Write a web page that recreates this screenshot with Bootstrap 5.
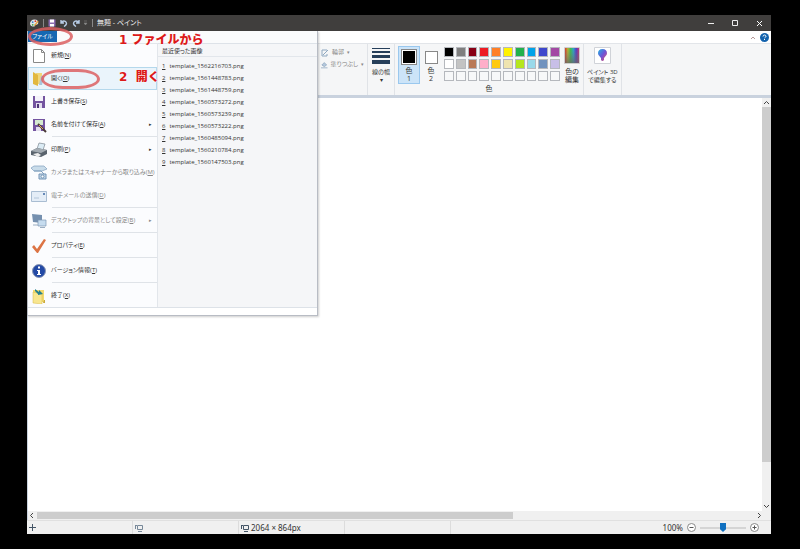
<!DOCTYPE html>
<html>
<head>
<meta charset="utf-8">
<meta name="viewport" content="width=device-width, initial-scale=1">
<title>無題 - ペイント</title>
<link href="https://cdn.jsdelivr.net/npm/bootstrap@5.3.0/dist/css/bootstrap.min.css" rel="stylesheet">
<style>
body{background:#000;font-family:"Open Sans","Noto Sans CJK JP",sans-serif;font-size:6px;line-height:9px;color:#333;font-feature-settings:"palt"}
.frame{min-height:100vh;padding:15px 29px 15px 27px}
.titlebar{height:16px;background:#403e3d;color:#eee;padding:0 3px;gap:4px}
.titlebar h1{font-size:7px;line-height:16px;font-weight:400;margin:0}
button{border:0;background:none;padding:0;color:inherit;font:inherit;line-height:inherit}
.vbar{width:1px;height:8px;background:#888}
.wincontrols{gap:14px}
.tabrow{height:12px;padding:0 2px}
.ribbon{height:55px;background:#f5f6f7;border-top:1px solid #e2e5e9;border-bottom:3px solid #c9d2de;padding-left:291px}
.group{border-right:1px solid #e0e3e7;padding:2px 3px 0}
.shapes{width:50px;color:#888;gap:3px;padding-top:4px}
.shapes button{white-space:nowrap;gap:3px}
.linesize{width:27px}
.colorgroup{width:189px;font-size:7px}
.toolbtn{height:38px;text-align:center;line-height:8px}
.slot{width:22px;border:1px solid transparent;padding-top:2px}
.slot.chosen{background:#cce4f8;border-color:#9ac8ee}
.swatch{display:block;margin:0 auto 2px;border:1px solid #888;outline:1px solid #fff;outline-offset:-2px;width:16px;height:16px}
.swatch.front{background:#000}
.swatch.back{background:#fff;width:13px;height:13px;margin-top:2px;margin-bottom:3px}
.palette{display:grid;grid-template-columns:repeat(10,1fr);align-content:start;gap:2px;width:116px;margin-left:2px;padding-top:1px}
.palette button{height:10px;border:1px solid #b5b8bd}
.workspace{background:#fff;border-left:1px solid #c9d2de}
.scroll{background:#f0f0f0}
.scroll-v{width:9px}
.scroll-h{height:9px}
.thumb-v{background:#cdcdcd;height:86%;width:9px}
.thumb-h{background:#cdcdcd;height:7px;width:64%}
.status{height:14px;background:#f0f0f0;border-top:1px solid #e0e0e0;font-size:8px;line-height:12px;font-family:"Noto Sans","Open Sans",sans-serif}
.cell{width:106px;padding-left:2px;border-right:1px solid #dcdcdc;gap:2px}
.zoomrange{appearance:none;width:46px;height:9px;background:linear-gradient(#d5d5d5,#d5d5d5) center/100% 2px no-repeat;margin:0}
.zoomrange::-webkit-slider-thumb{appearance:none;width:6px;height:9px;background:#1070c0;clip-path:polygon(0 0,100% 0,100% 70%,50% 100%,0 70%)}
.filemenu{top:16px;left:0;width:291px;background:#f5f6f8;border:1px solid #b8bcc4;border-width:0 1px 1px;box-shadow:1px 1px 2px #0003}
.menutop{height:12px;background:#fafbfc}
.filetab{width:29px;height:11px;background:#1668b2;color:#fff;text-align:center}
.menuleft{width:130px;background:#fbfcfe;border-right:1px solid #e2e6eb;border-top:1px solid #e2e6eb}
.menuleft button{height:23px;width:100%;padding:0 4px 0 2px;text-align:left;gap:4px;border:1px solid transparent;white-space:nowrap}
.menuleft button.hot{background:#eaf4fb;border-color:#b4d8ec}
.menuleft button:disabled{color:#888}
.menuleft svg.ico{width:16px;height:16px;flex:none}
.rule{height:1px;background:#dfe3e8;margin:0 0 1px 24px}
.recent{border-top:1px solid #dde2e8;padding-top:2px}
.recent h2{font-size:6px;line-height:10px;font-weight:400;margin:0 0 3px;padding-left:4px;border-bottom:1px solid #e2e6eb}
.recent a{display:flex;gap:4px;line-height:12px;color:#333;text-decoration:none;padding-left:4px}
.menufoot{height:8px;background:#fff;border-top:1px solid #dde2e8}
.note{color:#dc1a1a;font-weight:900;font-size:12px;line-height:14px;font-family:"DejaVu Sans","Noto Sans CJK JP",sans-serif;font-feature-settings:normal;text-shadow:0 0 1px #fff,0 0 2px #fff;white-space:pre}
.note1{left:92px;top:18px}
.note2{left:92px;top:55px}
.ring{border:3px solid #dc5f61d9}
.ring1{left:1px;top:12px;width:45px;height:19px;border-radius:50%}
.ring2{left:14px;top:54px;width:59px;height:20px;border-radius:22px/10px}
</style>
<script src="https://cdn.jsdelivr.net/npm/bootstrap@5.3.0/dist/js/bootstrap.bundle.min.js"></script>
</head>
<body>
<div class="frame d-flex flex-column">
<main class="position-relative flex-grow-1 d-flex flex-column">
<header class="titlebar d-flex align-items-center">
<svg width="9" height="10" viewBox="0 0 10 10"><path d="M5 1C2 1 0 3 0 5.500S2 9 5 9q1-1 0-2 2 0 4-1Q10 1 5 1Z" fill="#dfe5e8"/><circle cx="3" cy="4" r="1" fill="#2f7dd0"/><circle cx="6" cy="3" r="1" fill="#d63b30"/><circle cx="3" cy="7" r="1" fill="#40a347"/><path d="m5 8 4-5" stroke="#e9a33c" stroke-width="1.500"/></svg>
<span class="vbar"></span>
<button aria-label="Save"><svg class="d-block" width="8" height="8" viewBox="0 0 16 16"><path d="M1 1h14v14H1z" fill="#8a6bb0"/><path d="M4 1h8v6H4zM4 10h8v5H4z" fill="#fff"/></svg></button>
<button aria-label="Undo"><svg class="d-block" width="8" height="8" viewBox="0 0 8 8" fill="none" stroke="#b7cbe5" stroke-width="1.400"><path d="M1 1v3h3M1 4q2-3 4.500-1.500Q8 5 4 7.500"/></svg></button>
<button aria-label="Redo"><svg class="d-block" width="8" height="8" viewBox="0 0 8 8" fill="none" stroke="#b7cbe5" stroke-width="1.400"><path d="M7 1v3H4M7 4Q5 1 2.500 2.500 0 5 4 7.500"/></svg></button>
<button aria-label="Customize"><svg class="d-block" width="4" height="6"><path d="M0 1h3M0 3h3l-1.500 2z" fill="#888" stroke="#888" stroke-width=".5"/></svg></button>
<span class="vbar"></span>
<h1>無題 - ペイント</h1>
<div class="wincontrols ms-auto d-flex">
<button aria-label="Minimize"><svg class="d-block" width="10" height="10"><path d="M2 5.500h6" stroke="#eee"/></svg></button>
<button aria-label="Maximize"><svg class="d-block" width="10" height="10"><path d="M2.500 2.500h5v5h-5z" fill="none" stroke="#eee"/></svg></button>
<button aria-label="Close"><svg class="d-block me-1" width="10" height="10"><path d="m3 3 5 5m0-5L3 8" stroke="#fff"/></svg></button>
</div>
</header>
<div class="tabrow bg-white d-flex align-items-center justify-content-end gap-1">
<button aria-label="Collapse ribbon"><svg class="d-block" width="6" height="5"><path d="m1 4 2-2 2 2" fill="none" stroke="#b79a9a"/></svg></button>
<button aria-label="Help"><svg class="d-block" width="9" height="9" viewBox="0 0 9 9"><circle cx="4.500" cy="4.500" r="4.500" fill="#1262ad"/><path d="M3 3.500q.2-1.500 1.500-1.500T6 3.300Q6 4 4.500 5M4.500 6v1" fill="none" stroke="#fff"/></svg></button>
</div>
<section class="ribbon d-flex">
<div class="group shapes d-flex flex-column">
<button class="d-flex align-items-center" disabled><svg width="8" height="8" viewBox="0 0 8 8"><path d="M1 1h5M1 1v6h5V5M2 6l5-5" fill="none" stroke="#8fa8c0"/></svg>輪郭<small>▾</small></button>
<button class="d-flex align-items-center" disabled><svg width="8" height="8" viewBox="0 0 8 8"><path d="m1 4 3-3 3 3-3 2z" fill="#b4c8dc" stroke="#7f9ab5" stroke-width=".7"/><path d="M0 7.500h8" stroke="#8fa8c0"/></svg>塗りつぶし<small>▾</small></button>
</div>
<div class="group linesize px-0"><button class="toolbtn w-100"><svg class="d-block mx-auto mb-1" width="18" height="17"><path d="M0 1.500h18" stroke="#263f5a"/><path d="M0 5h18" stroke="#263f5a" stroke-width="2"/><path d="M0 9.500h18" stroke="#263f5a" stroke-width="3"/><path d="M0 15h18" stroke="#263f5a" stroke-width="4"/></svg>線の幅<br>▾</button></div>
<div class="group colorgroup">
<div class="d-flex">
<button class="toolbtn slot chosen"><span class="swatch front"></span>色<br>1</button>
<button class="toolbtn slot"><span class="swatch back"></span>色<br>2</button>
<div class="palette" id="palette"></div>
<button class="toolbtn ms-1"><svg class="d-block mx-auto mb-1" width="16" height="17"><defs><linearGradient id="hue"><stop stop-color="#e03028"/><stop offset=".2" stop-color="#b8b830"/><stop offset=".4" stop-color="#38c050"/><stop offset=".6" stop-color="#28a8c8"/><stop offset=".8" stop-color="#5038d0"/><stop offset="1" stop-color="#c83070"/></linearGradient><linearGradient id="dim" x2="0" y2="1"><stop stop-color="#777" stop-opacity="0"/><stop offset="1" stop-color="#666" stop-opacity=".8"/></linearGradient></defs><path d="M1 1h14v15H1z" fill="url(#hue)"/><path d="M.5.5h15v16H.5z" fill="url(#dim)" stroke="#ccc"/></svg>色の<br>編集</button>
</div>
<div class="text-center">色</div>
</div>
<div class="group"><button class="toolbtn"><svg class="d-block mx-auto mb-1" width="17" height="17"><defs><linearGradient id="pin" x2="1" y2="1"><stop stop-color="#20b5e0"/><stop offset=".5" stop-color="#6b55d8"/><stop offset="1" stop-color="#f0506a"/></linearGradient></defs><path d="M.5.5h16v16H.5z" fill="#fff" stroke="#d0d3d8"/><path d="M8.500 2C5.500 2 4 4 4 6.200c0 2 2 3.300 3 4.800v2q1.500 2 3 0v-2c1-1.500 3-2.800 3-4.800C13 4 11.500 2 8.500 2Z" fill="url(#pin)"/></svg>ペイント 3D<br>で編集する</button></div>
</section>
<section class="workspace flex-grow-1 d-flex flex-column" aria-label="Canvas">
<div class="d-flex flex-grow-1"><div class="flex-grow-1"></div>
<div class="scroll scroll-v d-flex flex-column"><svg width="9" height="9"><path d="m2 6 2.500-2.500L7 6" fill="none" stroke="#444"/></svg><div class="thumb-v"></div><svg class="mt-auto" width="9" height="9"><path d="m2 3 2.500 2.500L7 3" fill="none" stroke="#444"/></svg></div></div>
<div class="scroll scroll-h d-flex align-items-center"><svg width="9" height="9"><path d="M5 2 2.500 4.500 5 7" fill="none" stroke="#444"/></svg><div class="thumb-h"></div><svg class="ms-auto me-2" width="9" height="9"><path d="m4 2 2.500 2.500L4 7" fill="none" stroke="#444"/></svg></div>
</section>
<footer class="status d-flex">
<div class="cell d-flex align-items-center"><svg width="7" height="7"><path d="M3.500 0v7M0 3.500h7" stroke="#456"/></svg></div>
<div class="cell d-flex align-items-center"><svg width="8" height="8"><path d="M2.500 1.500h5v4h-5zM0 1.500h2M.5 1v4M3 7.500h4" fill="none" stroke="#789"/></svg></div>
<div class="cell d-flex align-items-center"><svg width="8" height="8"><path d="M2.500 1.500h5v4h-5zM0 1.500h2M.5 1v4M3 7.500h4" fill="none" stroke="#456"/></svg>2064 × 864px</div>
<div class="cell"></div>
<div class="ms-auto d-flex align-items-center gap-1 pe-2"><label for="zoom">100%</label>
<button aria-label="Zoom out"><svg class="d-block" width="9" height="9"><circle cx="4.500" cy="4.500" r="4" fill="#fff" stroke="#888"/><path d="M2.500 4.500h4" stroke="#555"/></svg></button>
<input class="zoomrange" id="zoom" type="range" value="50">
<button class="me-1" aria-label="Zoom in"><svg class="d-block" width="9" height="9"><circle cx="4.500" cy="4.500" r="4" fill="#fff" stroke="#888"/><path d="M2.500 4.500h4m-2-2v4" stroke="#555"/></svg></button></div>
</footer>
<nav class="filemenu position-absolute" aria-label="ファイル">
<div class="menutop"><button class="filetab d-block">ファイル</button></div>
<div class="d-flex">
<div class="menuleft flex-shrink-0">
<button class="d-flex align-items-center"><svg class="ico" viewBox="0 0 16 16"><path d="M2.500 1.500h8l3 3v10h-11zM10.500 1.500v3h3" fill="#fff" stroke="#888"/></svg><span>新規(<u>N</u>)</span></button>
<button class="hot d-flex align-items-center"><svg class="ico" viewBox="0 0 16 16"><path d="M5 2h6v11H5z" fill="#f0d67a"/><path d="m2 1 5 3v11l-5-2z" fill="#e2b83f"/><path d="m8 14 2-9h3l-2 9z" fill="#a9c4dc"/></svg><span>開く(<u>O</u>)</span></button>
<button class="d-flex align-items-center"><svg class="ico" viewBox="0 0 16 16"><path d="M2 2h12v12H2z" fill="#7454a0"/><path d="M4 2h8v5H4z" fill="#f4f2fa"/><path d="M5 9h6v5H5z" fill="#e3deee"/><path d="M6 10h2v4H6z" fill="#503678"/></svg><span>上書き保存(<u>S</u>)</span></button>
<button class="d-flex align-items-center"><svg class="ico" viewBox="0 0 16 16"><path d="M2 2h12v12H2z" fill="#7454a0"/><path d="M4 3h8v5H4z" fill="#d5ead0"/><path d="M5 10h5v4H5z" fill="#e3deee"/><path d="m7 7 8 8" stroke="#4a3a38" stroke-width="2"/><path d="m8 8 4 4" stroke="#dfa85f"/></svg><span>名前を付けて保存(<u>A</u>)</span><small class="ms-auto">▸</small></button>
<div class="rule"></div>
<button class="d-flex align-items-center"><svg class="ico" viewBox="0 0 16 16"><path d="m6 7 2-6 6 1-2 6z" fill="#dcecf5" stroke="#7c8790" stroke-width=".7"/><path d="m0 9 6-3 10 2v4l-6 3-10-2z" fill="#59636d"/><path d="m0 9 6-3 10 2-6 3z" fill="#a3abb2"/><path d="m2 12 5-1 3 2-3 2z" fill="#eee"/></svg><span>印刷(<u>P</u>)</span><small class="ms-auto">▸</small></button>
<button class="d-flex align-items-center" disabled><svg class="ico" viewBox="0 0 16 16"><path d="m0 3 3-2h10l3 3-5 2H3z" fill="#c9dcea" stroke="#7f9fbd" stroke-width=".7"/><path d="M3 6h7l3 3" fill="none" stroke="#7f9fbd"/><path d="M8 9h7v5H8z" fill="#c4d7e8" stroke="#7294b6"/><circle cx="11.500" cy="11.500" r="1.500" fill="#fff" stroke="#7294b6"/></svg><span>カメラまたはスキャナーから取り込み(<u>M</u>)</span></button>
<button class="d-flex align-items-center" disabled><svg class="ico" viewBox="0 0 16 16"><path d="M.5 3.500h15v10H.5z" fill="#e4edf7" stroke="#a9bdd2"/><path d="M12 5h2v2h-2z" fill="#6689b8"/><path d="M3 10h5" stroke="#b3c6da"/></svg><span>電子メールの送信(<u>D</u>)</span></button>
<div class="rule"></div>
<button class="d-flex align-items-center" disabled><svg class="ico" viewBox="0 0 16 16"><path d="m1 1 10 1v8L2 9z" fill="#7590af"/><path d="M7 7h8v6H7z" fill="#c6dcef" stroke="#8099b5" stroke-width=".7"/><path d="M2 12h5m2 2.500h5" stroke="#9baec2"/></svg><span>デスクトップの背景として設定(<u>B</u>)</span><small class="ms-auto">▸</small></button>
<div class="rule"></div>
<button class="d-flex align-items-center"><svg class="ico" viewBox="0 0 16 16"><path d="m1 9 2-2 3 4 7-10 2 1-8 13H6z" fill="#dc7444"/></svg><span>プロパティ(<u>E</u>)</span></button>
<div class="rule"></div>
<button class="d-flex align-items-center"><svg class="ico" viewBox="0 0 16 16"><circle cx="8" cy="8" r="6.500" fill="#2349a5" stroke="#8b98b5"/><path d="M7 3.500h2v2H7zM6 7h3v4h1v1H6v-1h1V8H6z" fill="#fff"/></svg><span>バージョン情報(<u>T</u>)</span></button>
<div class="rule"></div>
<button class="d-flex align-items-center"><svg class="ico" viewBox="0 0 16 16"><path d="M2 2h11v12H2z" fill="#f2da6e"/><path d="m2 4 9 2v10l-9-1z" fill="#f8e68f" stroke="#d9bb45" stroke-width=".5"/><path d="m4 1 4 3V2l4 4-5 1V6L4 3z" fill="#25808f"/><path d="M13 12h1v3h-2z" fill="#caa93d"/></svg><span>終了(<u>X</u>)</span></button>
</div>
<div class="recent flex-grow-1"><h2>最近使った画像</h2>
<a href="#"><u>1</u>template_1562216703.png</a>
<a href="#"><u>2</u>template_1561448783.png</a>
<a href="#"><u>3</u>template_1561448759.png</a>
<a href="#"><u>4</u>template_1560573272.png</a>
<a href="#"><u>5</u>template_1560573239.png</a>
<a href="#"><u>6</u>template_1560573222.png</a>
<a href="#"><u>7</u>template_1560485094.png</a>
<a href="#"><u>8</u>template_1560210784.png</a>
<a href="#"><u>9</u>template_1560147503.png</a>
</div>
</div>
<div class="menufoot"></div>
</nav>
<div class="note note1 position-absolute">1 ファイルから</div>
<div class="note note2 position-absolute">2  開く</div>
<div class="ring ring1 position-absolute"></div>
<div class="ring ring2 position-absolute"></div>
</main>
</div>
<script>
const colors=["#000","#7f7f7f","#880015","#ed1c24","#ff7f27","#fff200","#22b14c","#00a2e8","#3f48cc","#a349a4","#fff","#c3c3c3","#b97a57","#ffaec9","#ffc90e","#efe4b0","#b5e61d","#99d9ea","#7092be","#c8bfe7"];
const palette=document.getElementById("palette");
for(let i=0;i<30;i++){const b=document.createElement("button");b.style.backgroundColor=colors[i]||"#f7f8f9";b.ariaLabel="color "+(i+1);palette.append(b)}
</script>
</body>
</html>
